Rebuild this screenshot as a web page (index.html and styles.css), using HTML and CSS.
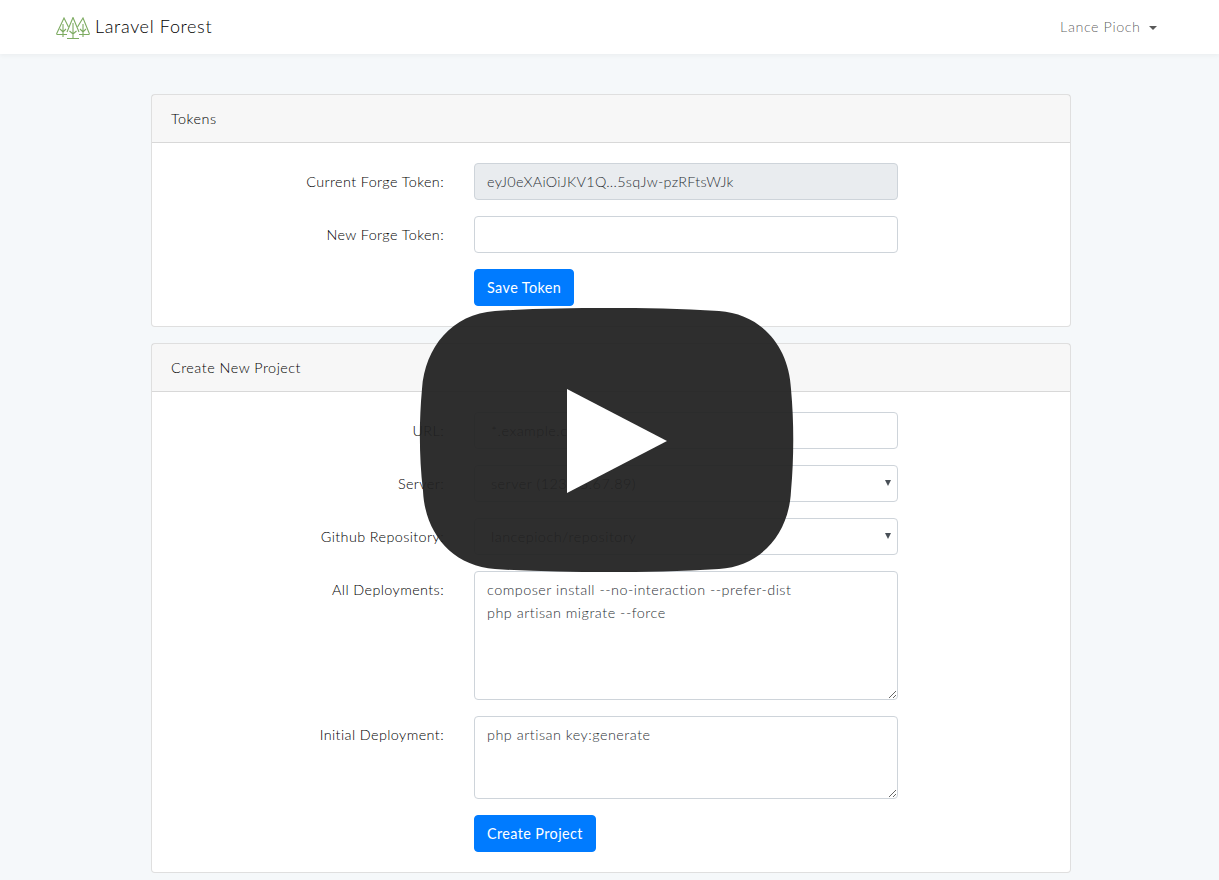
FILE: index.html
```html
<!DOCTYPE html>
<html lang="en">
<head>
    <meta charset="UTF-8">
    <title>Laravel Forest</title>
    <link rel="stylesheet" href="styles.css">
</head>
<body>

    <nav class="navbar">
        <a class="brand" href="#">
            <svg class="brand-logo" viewBox="0 0 34 23" width="34" height="23" fill="none" stroke="#7dab61" stroke-width="1.1">
                <path d="M.5 17 8 1 12.500 10M7 7V20M4 12 7 15 10 12"/>
                <path d="M11 15 17 .5 23 15M17 6V22M13.500 14 17 17 20.500 14"/>
                <path d="M21.500 10 27 1 33.500 17M27 7V20M24 12 27 15 30 12"/>
                <path d="M.5 17.500H11M23 17.500H33.500M11 21.500H23"/>
            </svg>
            Laravel Forest
        </a>
        <a class="user-menu" href="#">Lance Pioch <span class="caret"></span></a>
    </nav>

    <main class="content">
        <section class="card">
            <div class="card-header">Tokens</div>
            <form class="card-body">
                <div class="form-row">
                    <label for="currentToken">Current Forge Token:</label>
                    <input class="form-control token-value" type="text" id="currentToken" value="eyJ0eXAiOiJKV1Q...5sqJw-pzRFtsWJk" readonly>
                </div>
                <div class="form-row">
                    <label for="newToken">New Forge Token:</label>
                    <input class="form-control" type="text" id="newToken">
                </div>
                <div class="form-row form-row-last">
                    <span></span>
                    <div><button class="btn" type="button">Save Token</button></div>
                </div>
            </form>
        </section>

        <section class="card">
            <div class="card-header">Create New Project</div>
            <form class="card-body">
                <div class="form-row">
                    <label for="url">URL:</label>
                    <input class="form-control input-url" type="text" id="url" value="*.example.com">
                </div>
                <div class="form-row">
                    <label for="server">Server:</label>
                    <div class="select-wrap">
                        <select class="form-control" id="server">
                            <option>server (123.45.67.89)</option>
                        </select>
                    </div>
                </div>
                <div class="form-row">
                    <label for="repo">Github Repository:</label>
                    <div class="select-wrap">
                        <select class="form-control" id="repo">
                            <option>lancepioch/repository</option>
                        </select>
                    </div>
                </div>
                <div class="form-row">
                    <label for="allDeploy">All Deployments:</label>
                    <textarea class="form-control" id="allDeploy" rows="5">composer install --no-interaction --prefer-dist
php artisan migrate --force</textarea>
                </div>
                <div class="form-row">
                    <label for="initDeploy">Initial Deployment:</label>
                    <textarea class="form-control" id="initDeploy" rows="3">php artisan key:generate</textarea>
                </div>
                <div class="form-row form-row-last">
                    <span></span>
                    <div><button class="btn" type="button">Create Project</button></div>
                </div>
            </form>
        </section>
    </main>

    <!-- Bouton play par-dessus la page -->
    <svg class="play-button" viewBox="0 0 376 266" width="376" height="266">
        <path class="play-bg" d="M188 1C225 1 262 1.500 300 4C343 7 370 40 372 82C375 115 375 150 372 184C370 226 343 259 300 262C262 264.500 225 265 188 265C151 265 114 264.500 76 262C33 259 6 226 4 184C0 150 0 115 3 82C6 40 33 7 76 4C114 1.500 151 1 188 1Z"/>
        <path class="play-arrow" d="M148 82 248 134 148 186Z"/>
    </svg>

</body>
</html>
```

FILE: styles.css
```css
body {
    margin: 0;
    font-family: "Lato", sans-serif;
    font-weight: 300;
    font-size: 14.4px;
    line-height: 1.6;
    letter-spacing: .4px;
    color: #000;
    background-color: #f5f8fa;
}
a { text-decoration: none; }

.navbar {
    display: flex;
    align-items: center;
    justify-content: space-between;
    height: 54px;
    padding: 0 62px 0 56px;
    background-color: #fff;
    box-shadow: 0 2px 4px rgba(0, 0, 0, .04);
}
.brand {
    display: flex;
    align-items: center;
    gap: 5px;
    margin-top: -1px;
    font-size: 18px;
    letter-spacing: .65px;
    color: #000;
}
.brand-logo { margin-top: 4px; }
.user-menu {
    letter-spacing: .55px;
    color: rgba(0, 0, 0, .65);
}
.caret {
    display: inline-block;
    margin-left: 4px;
    vertical-align: 2px;
    border-top: 4px solid;
    border-left: 4px solid transparent;
    border-right: 4px solid transparent;
}

.content { padding-top: 40px; }
.card {
    margin: 0 148px 16px 151px;
    background-color: #fff;
    border: 1px solid rgba(0, 0, 0, .125);
    border-radius: 4px;
}
.card:last-child { margin-bottom: 0; }
.card-header {
    padding: 12px 19px;
    letter-spacing: .5px;
    background-color: rgba(0, 0, 0, .03);
    border-bottom: 1px solid rgba(0, 0, 0, .125);
}
.card-body { padding: 20px 20px 4px; }

.form-row {
    display: grid;
    grid-template-columns: 272px 424px;
    column-gap: 30px;
    margin-bottom: 16px;
}
.form-row label {
    padding-top: 7px;
    text-align: right;
}
.form-control {
    display: block;
    box-sizing: border-box;
    width: 100%;
    padding: 6px 12px;
    font-family: inherit;
    font-weight: inherit;
    font-size: 14.4px;
    line-height: 1.6;
    letter-spacing: .5px;
    color: #2b3035;
    background-color: #fff;
    border: 1px solid #ced4da;
    border-radius: 4px;
}
input.form-control, select.form-control { height: 37px; }
.form-control[readonly] { background-color: #e9ecef; }
.token-value { letter-spacing: .3px; }
.input-url { padding-left: 16px; }
textarea.form-control { margin: 0; }

.select-wrap { position: relative; }
.select-wrap select {
    appearance: none;
    padding-left: 16px;
}
.select-wrap::after {
    content: "";
    position: absolute;
    right: 7px;
    top: 15px;
    border-top: 6px solid #495057;
    border-left: 3px solid transparent;
    border-right: 3px solid transparent;
}

.btn {
    display: inline-block;
    padding: 6px 12px;
    font-family: inherit;
    font-weight: 400;
    font-size: 14.4px;
    line-height: 1.6;
    letter-spacing: .4px;
    color: #fff;
    background-color: #007bff;
    border: 1px solid #007bff;
    border-radius: 4px;
    cursor: pointer;
}

.play-button {
    position: absolute;
    left: 419px;
    top: 307px;
}
.play-bg { fill: #212121; fill-opacity: .94; }
.play-arrow { fill: #fff; }
```
